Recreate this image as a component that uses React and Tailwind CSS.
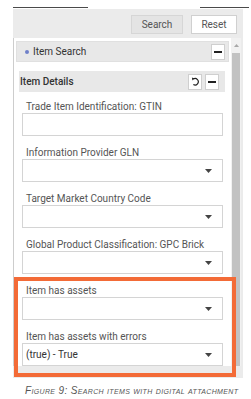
const Caret = () => (
  <svg width="7" height="4" viewBox="0 0 7 4" className="mr-[10px]">
    <path d="M0 0 L7 0 L3.5 4 Z" fill="#444" />
  </svg>
);

const MinusBtn = () => (
  <div className="w-[14px] h-[16px] bg-white border border-[#cfcfcf] flex items-center justify-center">
    <div className="w-[8px] h-[2px] bg-[#222]" />
  </div>
);

const ResetBtn = () => (
  <div className="w-[14px] h-[16px] bg-white border border-[#cfcfcf] flex items-center justify-center">
    <svg width="9" height="9" viewBox="0 0 10 10">
      <path d="M2.5 2.2 A3.6 3.6 0 1 1 2.6 8.3" fill="none" stroke="#222" strokeWidth="1.3" />
      <path d="M1 0.6 L3.8 1.6 L1.6 3.8 Z" fill="#222" />
    </svg>
  </div>
);

const Field = ({ label, select, value, first }) => (
  <div className={first ? "mt-[9px]" : "mt-[11px]"}>
    <div className="pl-[4px] h-[12px] leading-[12px] text-[10px] text-[#555]">{label}</div>
    <div className="h-[23px] border border-[#d4d4d4] bg-white flex items-center justify-between">
      <span className="pl-[3px] text-[10px] text-[#333]">{value}</span>
      {select && <Caret />}
    </div>
  </div>
);

export default function App() {
  return (
    <div className="relative w-[251px] h-[399px] bg-white pt-[7px] font-['Roboto',sans-serif] overflow-hidden">
      <div className="flex h-[1px]">
        <div className="ml-[13px] w-[75px] bg-[#4a4a4a]" />
        <div className="ml-auto mr-[2px] w-[49px] bg-[#4a4a4a]" />
      </div>

      <div className="mt-[1px] ml-[13px] w-[230px] bg-[#ebebeb] pt-[6px] pb-[12px]">
        <div className="flex justify-end gap-[8px] pr-[6px]">
          <div className="w-[52px] h-[19px] bg-[#e4e4e4] border border-[#d6d6d6] flex items-center justify-center text-[10px] text-[#555]">
            Search
          </div>
          <div className="w-[46px] h-[19px] bg-white border border-[#d0d0d0] flex items-center justify-center text-[10px] text-[#555]">
            Reset
          </div>
        </div>

        <div className="mt-[4px] flex">
          <div className="w-[218px] bg-white border-l border-[#cdcdcd] pt-[3px]">
            <div className="ml-[2px] mr-[2px] h-[21px] bg-[#e8e8e8] border border-[#e0e0e0] flex items-center">
              <div className="ml-[8px] w-[4px] h-[4px] rounded-full bg-[#6f80c9]" />
              <span className="ml-[4px] text-[10px] text-[#333]">Item Search</span>
              <div className="ml-auto mr-[3px]">
                <MinusBtn />
              </div>
            </div>

            <div className="ml-[5px] mr-[6px] mt-[9px] h-[21px] bg-[#e8e8e8] flex items-center">
              <span className="ml-[1px] text-[10px] font-medium text-[#333]">Item Details</span>
              <div className="ml-auto mr-[6px] flex gap-[3px]">
                <ResetBtn />
                <MinusBtn />
              </div>
            </div>

            <div className="ml-[8px] w-[201px]">
              <Field first label="Trade Item Identification: GTIN" />
              <Field select label="Information Provider GLN" />
              <Field select label="Target Market Country Code" />
              <Field select label="Global Product Classification: GPC Brick" />
              <Field select label="Item has assets" />
              <Field select label="Item has assets with errors" value="(true) - True" />
            </div>
          </div>

          <div className="w-[10px] bg-[#f1f1f1] flex flex-col items-center">
            <svg width="5" height="3" viewBox="0 0 5 3" className="mt-[6px]">
              <path d="M0 3 L5 3 L2.5 0 Z" fill="#a8a8a8" />
            </svg>
            <div className="mt-[6px] w-[8px] flex-1 bg-[#c2c2c2]" />
          </div>
        </div>
      </div>

      <div className="mt-[7px] pl-[25px] text-[10px] leading-[12px] italic text-[#555] font-['Liberation_Sans',sans-serif] [font-variant-caps:small-caps] tracking-[0.35px] whitespace-nowrap">
        Figure 9: Search items with digital attachment
      </div>

      <div className="absolute left-[14px] top-[277px] w-[222px] h-[100px] border-[4px] border-[#f36b37]" />
    </div>
  );
}
